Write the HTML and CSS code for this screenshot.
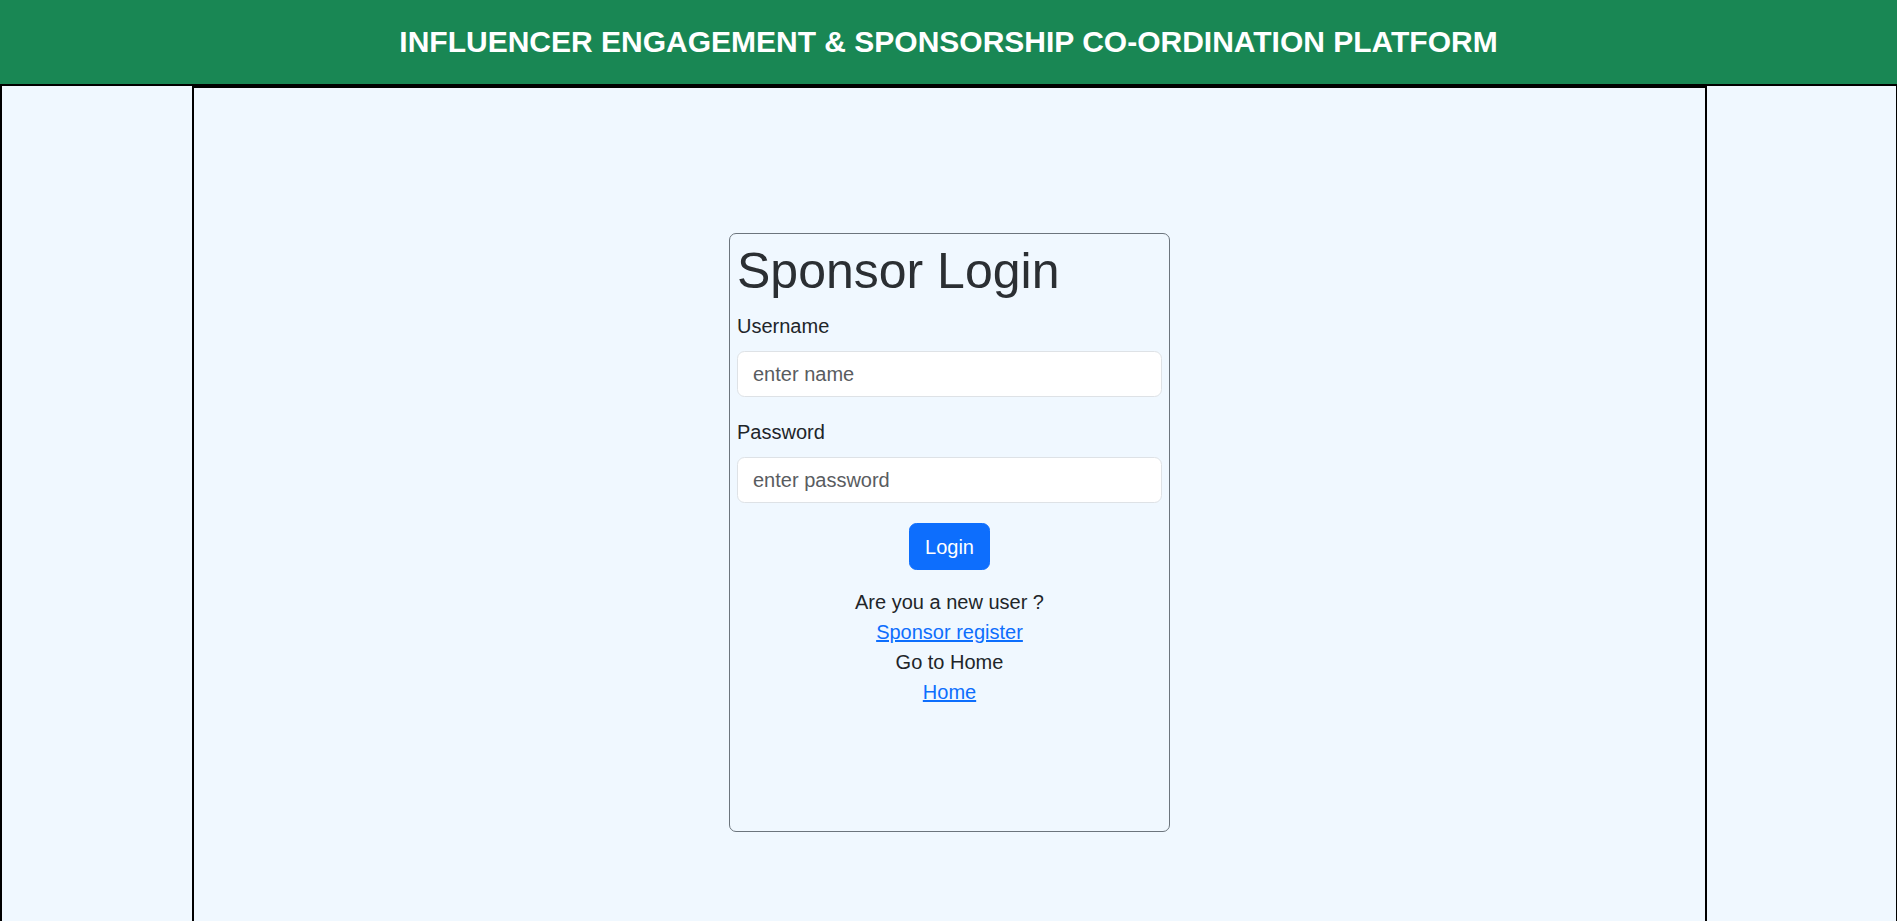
FILE: index.html
```html
<!DOCTYPE html>
<html lang="en">
<head>
<meta charset="utf-8">
<title>Sponsor Login</title>
<link rel="stylesheet" href="styles.css">
</head>
<body>
  <header class="topbar">
    <h4 class="topbar-title">INFLUENCER ENGAGEMENT &amp; SPONSORSHIP CO-ORDINATION PLATFORM</h4>
  </header>
  <div class="frame">
    <div class="side"></div>
    <main class="center">
      <form class="login-card" onsubmit="return false;">
        <h1 class="login-title">Sponsor Login</h1>
        <div class="field">
          <label class="field-label" for="username">Username</label>
          <input class="field-input" id="username" type="text" placeholder="enter name">
        </div>
        <div class="field">
          <label class="field-label" for="password">Password</label>
          <input class="field-input" id="password" type="password" placeholder="enter password">
        </div>
        <div class="actions">
          <button class="btn-login" type="submit">Login</button>
        </div>
        <div class="links">
          <div class="line">Are you a new user ?</div>
          <div class="line"><a href="#">Sponsor register</a></div>
          <div class="line">Go to Home</div>
          <div class="line"><a href="#">Home</a></div>
        </div>
      </form>
    </main>
    <div class="side"></div>
  </div>
</body>
</html>
```

FILE: styles.css
```css
* { box-sizing: border-box; }

html, body {
  margin: 0;
  padding: 0;
  overflow: hidden;
  background: #f0f8ff;
  font-family: "Liberation Sans", Arial, sans-serif;
  color: #212529;
}

.topbar {
  height: 84px;
  background: #198754;
  display: flex;
  align-items: center;
  justify-content: center;
}

.topbar-title {
  margin: 0;
  color: #ffffff;
  font-weight: 700;
  font-size: 30px;
  line-height: 1.2;
}

.frame {
  border-top: 2px solid #000;
  border-left: 2px solid #000;
  border-right: 1px solid #000;
  display: grid;
  grid-template-columns: 190px 1515px 1fr;
  height: 900px;
  background: #f0f8ff;
}

.side {
  background: #f0f8ff;
}

.center {
  border: 2px solid #000;
  background: #f0f8ff;
  padding-top: 145px;
}

.login-card {
  width: 441px;
  height: 599px;
  margin: 0 auto;
  border: 1px solid #6c757d;
  border-radius: 7px;
  padding: 7px;
}

.login-title {
  margin: 0 0 10px 0;
  font-size: 50px;
  font-weight: 400;
  line-height: 60px;
  color: #2b2f33;
}

.field {
  margin-bottom: 20px;
}

.field-label {
  display: block;
  font-size: 20px;
  line-height: 30px;
  margin-bottom: 10px;
}

.field-input {
  display: block;
  width: 100%;
  height: 46px;
  padding: 0 15px;
  font-family: inherit;
  font-size: 20px;
  color: #212529;
  background: #fff;
  border: 1px solid #dee2e6;
  border-radius: 7.5px;
  outline: none;
}

.field-input::placeholder {
  color: #595c5f;
}

.actions {
  display: flex;
  justify-content: center;
}

.btn-login {
  height: 47px;
  padding: 0 15px;
  font-family: inherit;
  font-size: 20px;
  line-height: 30px;
  color: #fff;
  background: #0d6efd;
  border: 1px solid #0d6efd;
  border-radius: 7.5px;
}

.links {
  margin-top: 17px;
  text-align: center;
  font-size: 20px;
  line-height: 30px;
}

.links a {
  color: #0d6efd;
  text-decoration: underline;
}
```
